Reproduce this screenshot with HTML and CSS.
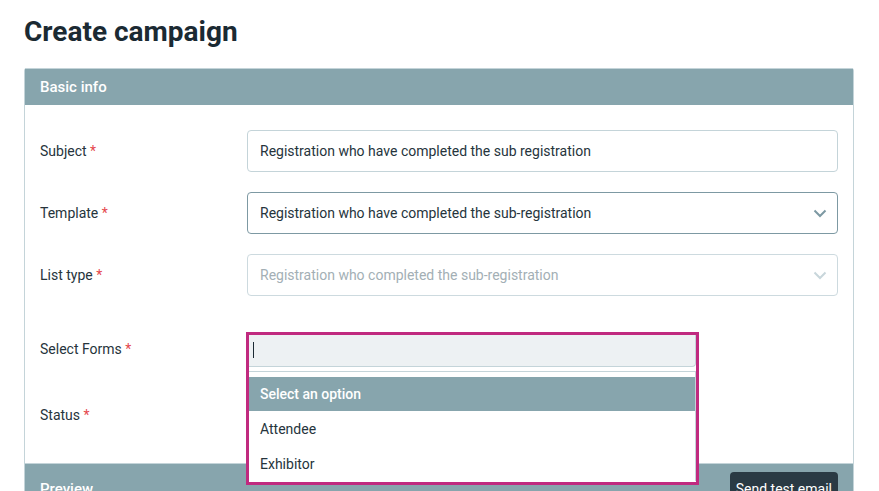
FILE: index.html
```html
<!DOCTYPE html>
<html lang="en">
<head>
    <meta charset="UTF-8">
    <meta name="viewport" content="width=device-width, initial-scale=1.0">
    <title>Create campaign</title>
    <link rel="stylesheet" href="styles.css">
</head>
<body>

    <div class="page">
        <h1>Create campaign</h1>

        <!-- Datos basicos -->
        <div class="card">
            <div class="card-header">Basic info</div>
            <div class="card-body">
                <div class="row">
                    <label>Subject <span class="req">*</span></label>
                    <div class="field">
                        <input type="text" class="input" value="Registration who have completed the sub registration">
                    </div>
                </div>

                <div class="row">
                    <label>Template <span class="req">*</span></label>
                    <div class="field">
                        <div class="select focus">
                            <span>Registration who have completed the sub-registration</span>
                            <svg class="chevron" width="14" height="9" viewBox="0 0 14 9"><path d="M1.5 1.5l5.5 5.5 5.5-5.5" fill="none" stroke="currentColor" stroke-width="2"/></svg>
                        </div>
                    </div>
                </div>

                <div class="row">
                    <label>List type <span class="req">*</span></label>
                    <div class="field">
                        <div class="select disabled">
                            <span>Registration who completed the sub-registration</span>
                            <svg class="chevron" width="14" height="9" viewBox="0 0 14 9"><path d="M1.5 1.5l5.5 5.5 5.5-5.5" fill="none" stroke="currentColor" stroke-width="2"/></svg>
                        </div>
                    </div>
                </div>

                <div class="row row-forms">
                    <label>Select Forms <span class="req">*</span></label>
                    <div class="field field-forms">
                        <!-- Menu desplegable abierto -->
                        <div class="dropdown">
                            <div class="search"><span class="caret"></span></div>
                            <ul class="options">
                                <li class="active">Select an option</li>
                                <li>Attendee</li>
                                <li>Exhibitor</li>
                            </ul>
                        </div>
                    </div>
                </div>

                <div class="row row-status">
                    <label>Status <span class="req">*</span></label>
                    <div class="field"></div>
                </div>
            </div>

            <div class="card-header preview">
                <span>Preview</span>
                <button class="btn-dark">Send test email</button>
            </div>
        </div>
    </div>

</body>
</html>
```

FILE: styles.css
```css
/* Estilos generales */
body {
    margin: 0;
    font-family: 'Roboto', 'Noto Sans', sans-serif;
    color: #2a3942;
    background: #ffffff;
    overflow: hidden;
}

.page {
    padding: 0 25px 0 24px;
}

h1 {
    margin: 0;
    padding-top: 15px;
    height: 68px;
    box-sizing: border-box;
    font-size: 28px;
    font-weight: 700;
    color: #1b2a33;
}

/* Tarjeta */
.card {
    border: 1px solid #c4d4d9;
    border-top: none;
    border-radius: 3px 3px 0 0;
    width: 830px;
    box-sizing: border-box;
}

.card-header {
    background: #87a5ad;
    color: #ffffff;
    font-weight: 500;
    font-size: 15px;
    height: 36px;
    padding: 0 15px;
    display: flex;
    align-items: center;
    border-top: 1px solid #c4d4d9;
}

.card-body {
    padding: 25px 15px 27px 15px;
}

.row {
    display: flex;
    align-items: center;
    margin-bottom: 20px;
}

.row label {
    width: 207px;
    flex: none;
    font-size: 14px;
    color: #26343c;
}

.req {
    color: #e5484d;
}

.field {
    flex: 1;
}

.input, .select {
    width: 100%;
    height: 42px;
    box-sizing: border-box;
    border: 1px solid #c4d4d9;
    border-radius: 4px;
    padding: 0 12px;
    font-family: inherit;
    font-size: 14px;
    color: #26343c;
    background: #fff;
}

.select {
    display: flex;
    align-items: center;
    justify-content: space-between;
}

.select.focus {
    border-color: #7d99a3;
}

.select.focus .chevron {
    color: #7d99a3;
}

.select.disabled {
    color: #a3afb5;
    border-color: #cddadf;
}

.select.disabled .chevron {
    color: #c8d6db;
}

.chevron {
    margin-right: -2px;
}

/* Selector de formularios */
.row-forms {
    margin-top: 36px;
    margin-bottom: 0;
}

.row-forms label {
    margin-top: -3px;
}

.field-forms {
    position: relative;
    height: 37px;
}

.dropdown {
    position: absolute;
    top: 0;
    left: -1px;
    width: 453px;
    height: 153px;
    box-sizing: border-box;
    border: 3px solid #c02a7f;
    background: #fff;
    z-index: 2;
}

.search {
    height: 32px;
    background: #edf1f3;
    border-bottom: 1px solid #c4d4d9;
    border-right: 1px solid #c4d4d9;
    border-radius: 0 0 4px 0;
    padding: 7px 4px;
    box-sizing: border-box;
}

.caret {
    display: block;
    width: 1px;
    height: 16px;
    background: #1b2a33;
}

.options {
    list-style: none;
    margin: 4px 0 0 0;
    padding: 5px 0 0 0;
    border-top: 1px solid #c4d4d9;
    border-right: 1px solid #c4d4d9;
}

.options li {
    height: 35px;
    display: flex;
    align-items: center;
    padding: 0 11px;
    font-size: 14px;
    color: #26343c;
}

.options li.active {
    background: #87a5ad;
    color: #fff;
    font-weight: 500;
    height: 34px;
}

.row-status {
    margin-top: 25px;
    margin-bottom: 0;
}

.row-status .field {
    height: 42px;
}

/* Cabecera de vista previa */
.preview {
    align-items: flex-start;
    justify-content: space-between;
    height: 60px;
    padding-top: 8px;
    padding-right: 15px;
    box-sizing: border-box;
}

.preview span {
    padding-top: 8px;
}

.btn-dark {
    background: #2a3a44;
    color: #fff;
    border: none;
    border-radius: 4px;
    font-family: inherit;
    font-size: 14px;
    padding: 9px 6px;
    white-space: nowrap;
}
```
